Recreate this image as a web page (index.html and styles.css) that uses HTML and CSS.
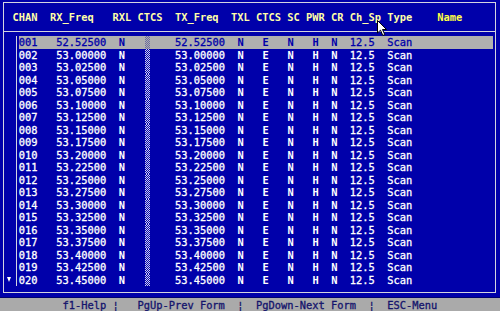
FILE: index.html
```html
<!DOCTYPE html>
<html>
<head>
<meta charset="utf-8">
<link rel="stylesheet" href="styles.css">
</head>
<body>
<div class="screen">
  <div class="frame">
    <div class="head"><div class="line">  CHAN  RX_Freq   RXL CTCS  TX_Freq  TXL CTCS SC PWR CR Ch_Sp Type    <span class="name">Name</span></div></div>
    <div class="list">
      <div class="gutter"><span class="arrow-down"></span></div>
      <div class="rows">
        <div class="row sel"><span>001   52.52500  <b>N</b>   </span><span class="shade"></span><span>    52.52500  <b>N</b>   <b>E</b>   <b>N</b>   <b>H</b>  <b>N</b>  12.5  Scan</span></div>
        <div class="row"><span>002   53.00000  <b>N</b>   </span><span class="shade"></span><span>    53.00000  <b>N</b>   <b>E</b>   <b>N</b>   <b>H</b>  <b>N</b>  12.5  Scan</span></div>
        <div class="row"><span>003   53.02500  <b>N</b>   </span><span class="shade"></span><span>    53.02500  <b>N</b>   <b>E</b>   <b>N</b>   <b>H</b>  <b>N</b>  12.5  Scan</span></div>
        <div class="row"><span>004   53.05000  <b>N</b>   </span><span class="shade"></span><span>    53.05000  <b>N</b>   <b>E</b>   <b>N</b>   <b>H</b>  <b>N</b>  12.5  Scan</span></div>
        <div class="row"><span>005   53.07500  <b>N</b>   </span><span class="shade"></span><span>    53.07500  <b>N</b>   <b>E</b>   <b>N</b>   <b>H</b>  <b>N</b>  12.5  Scan</span></div>
        <div class="row"><span>006   53.10000  <b>N</b>   </span><span class="shade"></span><span>    53.10000  <b>N</b>   <b>E</b>   <b>N</b>   <b>H</b>  <b>N</b>  12.5  Scan</span></div>
        <div class="row"><span>007   53.12500  <b>N</b>   </span><span class="shade"></span><span>    53.12500  <b>N</b>   <b>E</b>   <b>N</b>   <b>H</b>  <b>N</b>  12.5  Scan</span></div>
        <div class="row"><span>008   53.15000  <b>N</b>   </span><span class="shade"></span><span>    53.15000  <b>N</b>   <b>E</b>   <b>N</b>   <b>H</b>  <b>N</b>  12.5  Scan</span></div>
        <div class="row"><span>009   53.17500  <b>N</b>   </span><span class="shade"></span><span>    53.17500  <b>N</b>   <b>E</b>   <b>N</b>   <b>H</b>  <b>N</b>  12.5  Scan</span></div>
        <div class="row"><span>010   53.20000  <b>N</b>   </span><span class="shade"></span><span>    53.20000  <b>N</b>   <b>E</b>   <b>N</b>   <b>H</b>  <b>N</b>  12.5  Scan</span></div>
        <div class="row"><span>011   53.22500  <b>N</b>   </span><span class="shade"></span><span>    53.22500  <b>N</b>   <b>E</b>   <b>N</b>   <b>H</b>  <b>N</b>  12.5  Scan</span></div>
        <div class="row"><span>012   53.25000  <b>N</b>   </span><span class="shade"></span><span>    53.25000  <b>N</b>   <b>E</b>   <b>N</b>   <b>H</b>  <b>N</b>  12.5  Scan</span></div>
        <div class="row"><span>013   53.27500  <b>N</b>   </span><span class="shade"></span><span>    53.27500  <b>N</b>   <b>E</b>   <b>N</b>   <b>H</b>  <b>N</b>  12.5  Scan</span></div>
        <div class="row"><span>014   53.30000  <b>N</b>   </span><span class="shade"></span><span>    53.30000  <b>N</b>   <b>E</b>   <b>N</b>   <b>H</b>  <b>N</b>  12.5  Scan</span></div>
        <div class="row"><span>015   53.32500  <b>N</b>   </span><span class="shade"></span><span>    53.32500  <b>N</b>   <b>E</b>   <b>N</b>   <b>H</b>  <b>N</b>  12.5  Scan</span></div>
        <div class="row"><span>016   53.35000  <b>N</b>   </span><span class="shade"></span><span>    53.35000  <b>N</b>   <b>E</b>   <b>N</b>   <b>H</b>  <b>N</b>  12.5  Scan</span></div>
        <div class="row"><span>017   53.37500  <b>N</b>   </span><span class="shade"></span><span>    53.37500  <b>N</b>   <b>E</b>   <b>N</b>   <b>H</b>  <b>N</b>  12.5  Scan</span></div>
        <div class="row"><span>018   53.40000  <b>N</b>   </span><span class="shade"></span><span>    53.40000  <b>N</b>   <b>E</b>   <b>N</b>   <b>H</b>  <b>N</b>  12.5  Scan</span></div>
        <div class="row"><span>019   53.42500  <b>N</b>   </span><span class="shade"></span><span>    53.42500  <b>N</b>   <b>E</b>   <b>N</b>   <b>H</b>  <b>N</b>  12.5  Scan</span></div>
        <div class="row"><span>020   53.45000  <b>N</b>   </span><span class="shade"></span><span>    53.45000  <b>N</b>   <b>E</b>   <b>N</b>   <b>H</b>  <b>N</b>  12.5  Scan</span></div>
      </div>
    </div>
  </div>
  <div class="status">          f1-Help ¦   PgUp-Prev Form  ¦  PgDown-Next Form  ¦  ESC-Menu</div>
  <svg class="cursor" width="11" height="17" viewBox="0 0 11 17"><path d="M0.5 0.5 L0.5 13 L3.5 10.2 L5.8 15.5 L7.8 14.6 L5.5 9.5 L9.5 9.5 Z" fill="#fff" stroke="#000" stroke-width="1" stroke-linejoin="miter"/></svg>
</div>
</body>
</html>
```

FILE: styles.css
```css
html, body {
  margin: 0;
  padding: 0;
  background: #0000aa;
}

.screen {
  position: relative;
  width: 500px;
  height: 311px;
  overflow: hidden;
  background: #0000aa;
  font-family: "DejaVu Sans Mono", "Liberation Mono", monospace;
  font-size: 10.38px;
  color: #ffffff;
}

.frame {
  box-sizing: border-box;
  height: 291px;
  margin: 2px 4px 0 3px;
  border: 1px solid #d4d4e0;
}

.head {
  box-sizing: border-box;
  height: 29px;
  padding-top: 8px;
  border-bottom: 1px solid #d4d4e0;
}

.line {
  margin-left: -4px;
  height: 12.5px;
  line-height: 12.5px;
  white-space: pre;
  color: #ffffa8;
  font-weight: bold;
}

.name {
  color: #ffff44;
}

.list {
  display: flex;
  margin-left: -4px;
  padding-top: 4px;
}

.gutter {
  width: 3ch;
  flex: none;
  display: flex;
  flex-direction: column;
  justify-content: flex-end;
  background: linear-gradient(to right, transparent 16px, #d4d4e0 16px, #d4d4e0 17px, transparent 17px);
}

.arrow-down {
  display: block;
  width: 0;
  height: 0;
  margin: 0 0 4px 7px;
  border-left: 2px solid transparent;
  border-right: 2px solid transparent;
  border-top: 5px solid #ffffff;
}

.rows {
  width: 76ch;
  display: flex;
  flex-direction: column;
}

.row {
  display: flex;
  height: 12.5px;
  line-height: 12.5px;
  white-space: pre;
  color: #ffffff;
  -webkit-text-stroke: 0.3px currentColor;
}

.row b {
  font-weight: bold;
  -webkit-text-stroke: 0;
}

.row.sel {
  background: #b0b0b0;
  color: #0000aa;
}

.shade {
  width: 1ch;
  flex: none;
  background-image: conic-gradient(#d0d0f0 25%, transparent 0 50%, #d0d0f0 0 75%, transparent 0);
  background-size: 2px 2px;
  background-origin: content-box;
  background-clip: content-box;
  box-sizing: border-box;
  padding-left: 1px;
}

.row.sel .shade {
  background-image: conic-gradient(#6a6aa0 25%, transparent 0 50%, #6a6aa0 0 75%, transparent 0);
}

.status {
  box-sizing: border-box;
  height: 14px;
  margin-top: 4px;
  line-height: 14px;
  white-space: pre;
  background: #aaaaaa;
  color: #14146c;
  border-top: 1px solid #000070;
  -webkit-text-stroke: 0.3px currentColor;
}

.cursor {
  position: absolute;
  left: 377px;
  top: 20px;
}
```
